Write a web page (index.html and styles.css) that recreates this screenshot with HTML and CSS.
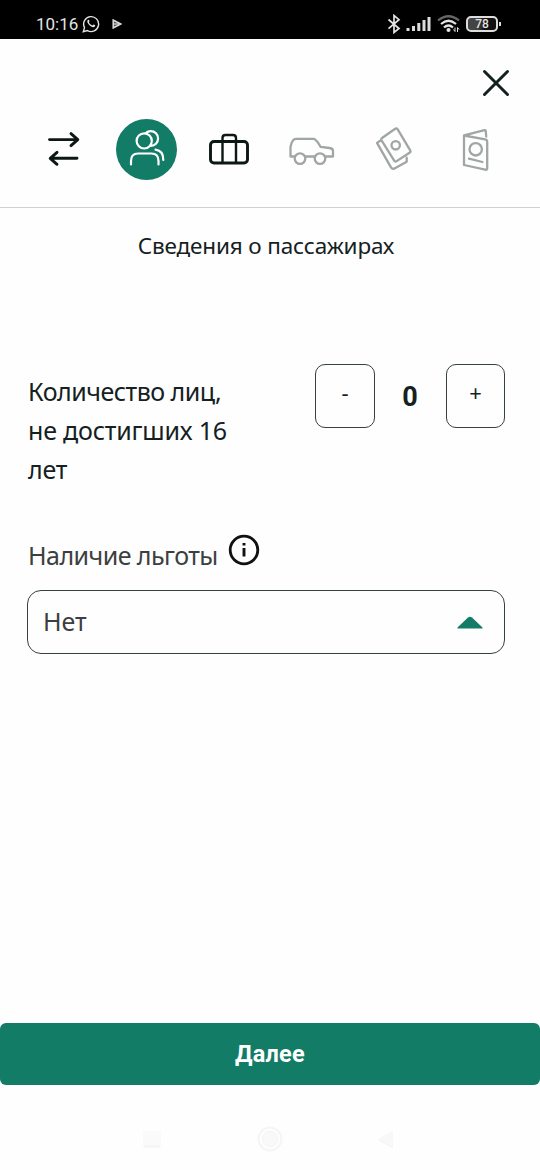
FILE: index.html
```html
<!DOCTYPE html>
<html lang="ru">
<head>
<meta charset="utf-8">
<title>Сведения о пассажирах</title>
<link rel="stylesheet" href="styles.css">
</head>
<body>
<div class="status">
  <span class="clock">10:16</span>
  <svg class="whatsapp" width="18" height="18" viewBox="0 0 18 18"><path d="M1.3 16.7l1.2-4.1A7.5 7.5 0 1 1 5.4 15.600z" fill="none" stroke="#e4e4e4" stroke-width="1.400"/><path d="M5.500 5.500c.8-1.200 1.600-.8 1.900.3.400 1-.8 1.200-.3 2 1 1.500 2 2.300 3.300 2.700.6 0 .8-1.200 1.500-.9 1.300.6 1.600.9 1.100 1.700-1.500 2-4 .5-5.500-1C6 8.800 4.700 6.900 5.500 5.500z" fill="#e4e4e4"/></svg>
  <svg class="play" width="10" height="10" viewBox="0 0 10 10"><path d="M1.200 1v8L9 5z" fill="#555" stroke="#ddd" stroke-width="1.500"/><path d="M2 5h5" stroke="#eee"/></svg>
  <div class="system">
    <svg width="14" height="20" viewBox="0 0 14 20"><path d="M1.500 5.500l10.500 9L7 18.500v-17l5 4.200-10.500 9" fill="none" stroke="#e4e4e4" stroke-width="1.700"/></svg>
    <svg class="signal" width="25" height="16" viewBox="0 0 25 16"><path d="M2 12v3M7.500 10v5M12.800 7v8M18 4v11M23 1v14" stroke="#ddd" stroke-width="3"/></svg>
    <svg class="wifi" width="24" height="18" viewBox="0 0 24 18"><g fill="none" stroke-width="2.200"><path d="M1 5.500q10.500-8.500 21 0" stroke="#666"/><path d="M4 9q7.500-6.500 15 0M7 12.500q4.500-4 9 0" stroke="#e4e4e4"/></g><circle cx="11.500" cy="15" r="2" fill="#e4e4e4"/><path d="M18 12.500v4M16.500 14.500l1.500 2M20.500 17v-4.500l1.500 2" stroke="#ddd" fill="none"/></svg>
    <div class="battery"><span>78</span></div>
  </div>
</div>
<header class="header">
  <button class="close" aria-label="Закрыть"><svg width="28" height="28" viewBox="0 0 28 28"><path d="M2.500 2.500l23 23M25.500 2.500l-23 23" stroke="#10211f" stroke-width="3" stroke-linecap="round"/></svg></button>
  <nav class="steps">
    <svg class="done" viewBox="34 119 60 60"><path d="M49.500 139.600H77M71 133.600l6.800 6-6.800 6M77 158.300H50.500M57 152.300l-6.800 6 6.800 6"/></svg>
    <div class="active"><svg viewBox="116.500 118.500 60 60"><circle cx="151.300" cy="138" r="7.300"/><circle cx="144.700" cy="140.400" r="7.600" fill="#127c67"/><path d="M131.500 164v-3.500q0-7.500 7-7.500h13.500q7 0 7 7.500v3.500M156 149.200q8 1 7.800 10.300"/></svg></div>
    <svg class="done" viewBox="199 119.500 60 60"><rect x="210.500" y="142" width="37" height="21.500" rx="3.500"/><path class="handle" d="M222.500 163v-24.500q0-3 3-3h7.500q3 0 3 3v24.500"/></svg>
    <svg viewBox="281 119 60 60"><path d="M294.500 156.500h-4v-9.500q1.500-8.200 5.500-8.200h18q3 1.500 6.500 8l9 1.200q3.500.5 3.500 3v5.500h-7.500M305.500 156.500h9"/><circle cx="300" cy="158.600" r="5.300"/><circle cx="320" cy="158.600" r="5.300"/></svg>
    <svg viewBox="363.300 119 60 60"><path d="M382 138.300l13.500-9.600q1.500-1 2.500.6l12.500 21q.8 1.500-.7 2.400l-12.800 8.400q-1.500 1-2.500-.5l-12.500-20q-1-1.300 0-2.300z"/><path d="M380.500 140.700l-3.200 2.200 14 24.500q1.400 2.200 3.500 1l12.200-6.700v-4"/><circle cx="396" cy="145.300" r="4.200"/></svg>
    <svg viewBox="445 119 60 60"><path d="M464 135.500l21.200 3.900q2 .4 2 2.300v26.500q0 2-2 1.400L464 165zM464 135.300l20.500-5.200q1.300-.3 1.300 1.400l.4 5M469 158.700l13.400 3.300"/><circle cx="475.700" cy="149.300" r="6.200"/></svg>
  </nav>
</header>
<main class="content">
  <h1 class="title">Сведения о пассажирах</h1>
  <section class="counter">
    <p class="label"><span class="tight">Количество лиц,</span><br>не достигших 16<br>лет</p>
    <button class="square">-</button>
    <output class="count">0</output>
    <button class="square plus">+</button>
  </section>
  <div class="benefit"><label>Наличие льготы</label><svg width="32" height="32" viewBox="0 0 32 32"><circle cx="16" cy="16" r="13.800" fill="none" stroke="#111" stroke-width="2.800"/><path d="M16 9v2.600M16 14v8.600" stroke="#111" stroke-width="2.900"/></svg></div>
  <div class="select"><span>Нет</span><svg width="26" height="13" viewBox="0 0 26 13"><path d="M.5 12.500v-1L11 1.500q2-1.600 4 0l10.500 10v1z" fill="#127c67"/></svg></div>
</main>
<button class="next">Далее</button>
<div class="sysnav">
  <svg width="20" height="20" viewBox="0 0 20 20"><path d="M1 2h18v16H1z" fill="#fafafa"/><path d="M2 17.500h16" stroke="#f4f4f4" stroke-width="2"/></svg>
  <svg width="26" height="26" viewBox="0 0 26 26"><circle cx="13" cy="13" r="11.500" fill="#fdfdfd" stroke="#f5f5f5" stroke-width="2"/><circle cx="13" cy="13" r="7.500" fill="#f9f9f9" stroke="#f5f5f5"/></svg>
  <svg width="20" height="20" viewBox="0 0 20 20"><path d="M1 10l15-9v18z" fill="#f8f8f8"/><path d="M2 11l14 8" stroke="#f2f2f2"/></svg>
</div>
</body>
</html>
```
FILE: styles.css
```css
* { box-sizing: border-box; }
body {
  margin: 0;
  width: 540px;
  height: 1170px;
  display: flex;
  flex-direction: column;
  background: #fefefe;
  color: #14211f;
  font-family: "Noto Sans", sans-serif;
  overflow: hidden;
}
button { font: inherit; color: inherit; background: none; border: 0; padding: 0; }
svg { display: block; flex: none; }

.status {
  height: 39px;
  flex: none;
  display: flex;
  align-items: center;
  padding: 9px 42px 0 36px;
  background: #000;
  color: #e4e4e4;
}
.clock { font: 400 17px/20px Roboto, sans-serif; width: 46px; }
.play { margin-left: 12px; }
.system { margin-left: auto; display: flex; align-items: center; }
.signal { margin-left: 5px; }
.wifi { margin-left: 6px; }
.battery {
  position: relative;
  margin-left: 5px;
  width: 32px;
  height: 16px;
  border: 2px solid #ddd;
  border-radius: 5px;
  background: linear-gradient(90deg, #444 35%, #111 60%);
  font: 500 12px/13px Roboto, sans-serif;
  text-align: center;
}
.battery::after {
  content: "";
  position: absolute;
  right: -5px;
  top: 4px;
  width: 2px;
  height: 4px;
  background: #ddd;
}

.header {
  height: 169px;
  flex: none;
  display: flex;
  flex-direction: column;
  border-bottom: 1px solid #d0d2d2;
}
.close { align-self: flex-end; margin: 30px 30px 0 0; height: 28px; }
.steps {
  display: flex;
  justify-content: space-between;
  margin-top: 22px;
  padding: 0 35px 0 34px;
}
.steps svg {
  width: 60px;
  height: 60px;
  fill: none;
  stroke: #a0a6a3;
  stroke-width: 2.3;
  stroke-linecap: round;
  stroke-linejoin: round;
}
.steps .done { stroke: #0c1716; stroke-width: 2.9; }
.handle { stroke-width: 2.4; }
.active { width: 61px; height: 61px; border-radius: 50%; background: #127c67; }
.steps .active svg { stroke: #fff; stroke-width: 2.2; }

.content { flex: 1; padding: 0 35px 0 27px; }
.title {
  margin: 20px 0 0;
  height: 36px;
  font-size: 22.5px;
  line-height: 36px;
  font-weight: 400;
  letter-spacing: -0.15px;
  text-align: center;
  white-space: nowrap;
}
.counter { display: flex; margin-top: 100px; height: 130px; }
.label {
  margin: 8px 0 0;
  padding-left: 1px;
  width: 288px;
  font-size: 25px;
  line-height: 39px;
  letter-spacing: -0.2px;
  white-space: nowrap;
}
.tight { letter-spacing: -0.5px; }
.square {
  width: 60px;
  height: 64px;
  border: 1px solid #35403f;
  border-radius: 10px;
  font-size: 22px;
  line-height: 54px;
  padding-bottom: 8px;
}
.plus { width: 59px; }
.count { width: 70px; margin-right: 1px; text-align: center; font: 700 27px/66px Roboto, sans-serif; }
.benefit {
  display: flex;
  margin-top: 39px;
  height: 57px;
  color: #3c3f40;
  font-size: 25px;
  line-height: 44px;
  letter-spacing: -0.55px;
  white-space: nowrap;
}
.benefit label { width: 201px; padding-left: 1px; }
.benefit svg { margin-top: 1px; }
.select {
  height: 64px;
  display: flex;
  align-items: center;
  justify-content: space-between;
  padding: 0 21px 0 15px;
  border: 1px solid #35403f;
  border-radius: 14px;
  color: #3c3f40;
  font-size: 25px;
}
.select span { padding-bottom: 2px; }
.next {
  height: 62px;
  flex: none;
  padding-top: 1px;
  border-radius: 6px;
  background: #127c67;
  color: #fff;
  font: 700 23.5px/61px Roboto, sans-serif;
  letter-spacing: 0.2px;
}
.sysnav {
  height: 85px;
  flex: none;
  display: flex;
  justify-content: space-between;
  align-items: center;
  padding: 22px 143px 0 142px;
}
```
